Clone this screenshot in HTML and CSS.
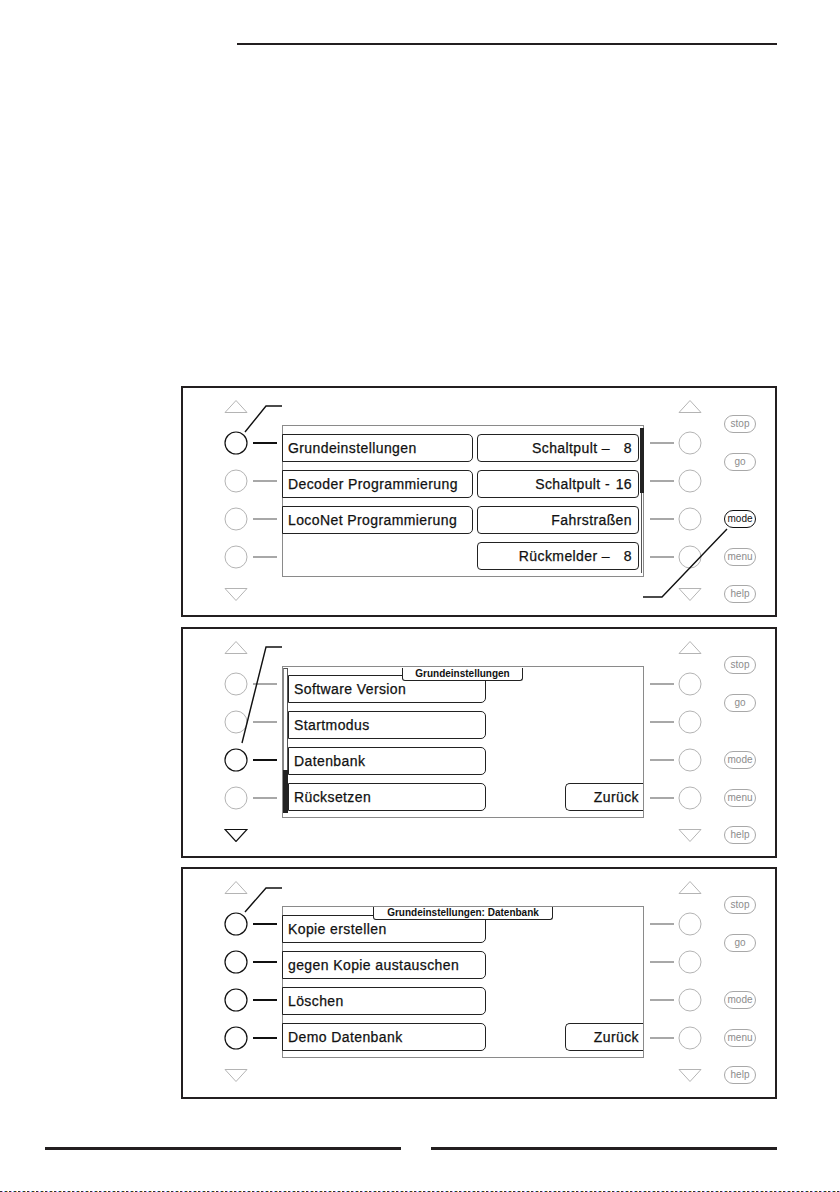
FILE: index.html
```html
<!DOCTYPE html>
<html lang="de">
<head>
<meta charset="utf-8">
<title>Grundeinstellungen</title>
<link rel="stylesheet" href="styles.css">
</head>
<body>
<div class="page">
  <div class="top-rule"></div>

  <div class="panels">
    <!-- Panel 1 -->
    <section class="panel">
      <svg class="callout" viewBox="0 0 596 231" width="596" height="231">
        <polyline points="64,46 85,20 101,20"/>
        <polyline points="546,143 481,211 462,211"/>
      </svg>
      <div class="controls">
        <svg class="tri off" viewBox="0 0 24 13"><polygon points="1,12.5 12,0.5 23,12.5"/></svg>
        <div class="rows">
          <div class="row"><svg class="knob on" viewBox="0 0 24 24"><circle cx="12" cy="12" r="11"/></svg></div>
          <div class="row"><svg class="knob off" viewBox="0 0 24 24"><circle cx="12" cy="12" r="11"/></svg></div>
          <div class="row"><svg class="knob off" viewBox="0 0 24 24"><circle cx="12" cy="12" r="11"/></svg></div>
          <div class="row"><svg class="knob off" viewBox="0 0 24 24"><circle cx="12" cy="12" r="11"/></svg></div>
        </div>
        <svg class="tri off down" viewBox="0 0 24 13"><polygon points="1,0.5 23,0.5 12,12.5"/></svg>
      </div>
      <div class="links">
        <div class="row"><span class="link on"></span></div>
        <div class="row"><span class="link"></span></div>
        <div class="row"><span class="link"></span></div>
        <div class="row"><span class="link"></span></div>
      </div>
      <div class="screen">
        <div class="menu-col col-a">
          <div class="btn btn-l">Grundeinstellungen</div>
          <div class="btn btn-l">Decoder Programmierung</div>
          <div class="btn btn-l">LocoNet Programmierung</div>
        </div>
        <div class="menu-col col-b">
          <div class="btn btn-r">Schaltpult –<span class="num">8</span></div>
          <div class="btn btn-r">Schaltpult -<span class="num">16</span></div>
          <div class="btn btn-r">Fahrstraßen</div>
          <div class="btn btn-r">Rückmelder –<span class="num">8</span></div>
        </div>
        <div class="scroll scroll-top"><div class="thumb"></div></div>
      </div>
      <div class="links links-r">
        <div class="row"><span class="link"></span></div>
        <div class="row"><span class="link"></span></div>
        <div class="row"><span class="link"></span></div>
        <div class="row"><span class="link"></span></div>
      </div>
      <div class="controls controls-r">
        <svg class="tri off" viewBox="0 0 24 13"><polygon points="1,12.5 12,0.5 23,12.5"/></svg>
        <div class="rows">
          <div class="row"><svg class="knob off" viewBox="0 0 24 24"><circle cx="12" cy="12" r="11"/></svg></div>
          <div class="row"><svg class="knob off" viewBox="0 0 24 24"><circle cx="12" cy="12" r="11"/></svg></div>
          <div class="row"><svg class="knob off" viewBox="0 0 24 24"><circle cx="12" cy="12" r="11"/></svg></div>
          <div class="row"><svg class="knob off" viewBox="0 0 24 24"><circle cx="12" cy="12" r="11"/></svg></div>
        </div>
        <svg class="tri off down" viewBox="0 0 24 13"><polygon points="1,0.5 23,0.5 12,12.5"/></svg>
      </div>
      <div class="side">
        <div class="pill p-stop">stop</div>
        <div class="pill p-go">go</div>
        <div class="pill p-mode active">mode</div>
        <div class="pill p-menu">menu</div>
        <div class="pill p-help">help</div>
      </div>
    </section>

    <!-- Panel 2 -->
    <section class="panel panel-2">
      <svg class="callout" viewBox="0 0 596 231" width="596" height="231">
        <polyline points="61,116 85,20 101,20"/>
      </svg>
      <div class="controls">
        <svg class="tri off" viewBox="0 0 24 13"><polygon points="1,12.5 12,0.5 23,12.5"/></svg>
        <div class="rows">
          <div class="row"><svg class="knob off" viewBox="0 0 24 24"><circle cx="12" cy="12" r="11"/></svg></div>
          <div class="row"><svg class="knob off" viewBox="0 0 24 24"><circle cx="12" cy="12" r="11"/></svg></div>
          <div class="row"><svg class="knob on" viewBox="0 0 24 24"><circle cx="12" cy="12" r="11"/></svg></div>
          <div class="row"><svg class="knob off" viewBox="0 0 24 24"><circle cx="12" cy="12" r="11"/></svg></div>
        </div>
        <svg class="tri on down" viewBox="0 0 24 13"><polygon points="1,0.5 23,0.5 12,12.5"/></svg>
      </div>
      <div class="links">
        <div class="row"><span class="link"></span></div>
        <div class="row"><span class="link"></span></div>
        <div class="row"><span class="link on"></span></div>
        <div class="row"><span class="link"></span></div>
      </div>
      <div class="screen">
        <div class="tab tab-2">Grundeinstellungen</div>
        <div class="scroll scroll-left"><div class="thumb"></div></div>
        <div class="menu-col col-wide">
          <div class="btn btn-w">Software Version</div>
          <div class="btn btn-w">Startmodus</div>
          <div class="btn btn-w">Datenbank</div>
          <div class="btn btn-w">Rücksetzen</div>
        </div>
        <div class="menu-col col-back">
          <div class="btn btn-back">Zurück</div>
        </div>
      </div>
      <div class="links links-r">
        <div class="row"><span class="link"></span></div>
        <div class="row"><span class="link"></span></div>
        <div class="row"><span class="link"></span></div>
        <div class="row"><span class="link"></span></div>
      </div>
      <div class="controls controls-r">
        <svg class="tri off" viewBox="0 0 24 13"><polygon points="1,12.5 12,0.5 23,12.5"/></svg>
        <div class="rows">
          <div class="row"><svg class="knob off" viewBox="0 0 24 24"><circle cx="12" cy="12" r="11"/></svg></div>
          <div class="row"><svg class="knob off" viewBox="0 0 24 24"><circle cx="12" cy="12" r="11"/></svg></div>
          <div class="row"><svg class="knob off" viewBox="0 0 24 24"><circle cx="12" cy="12" r="11"/></svg></div>
          <div class="row"><svg class="knob off" viewBox="0 0 24 24"><circle cx="12" cy="12" r="11"/></svg></div>
        </div>
        <svg class="tri off down" viewBox="0 0 24 13"><polygon points="1,0.5 23,0.5 12,12.5"/></svg>
      </div>
      <div class="side">
        <div class="pill p-stop">stop</div>
        <div class="pill p-go">go</div>
        <div class="pill p-mode">mode</div>
        <div class="pill p-menu">menu</div>
        <div class="pill p-help">help</div>
      </div>
    </section>

    <!-- Panel 3 -->
    <section class="panel panel-3">
      <svg class="callout" viewBox="0 0 596 231" width="596" height="231">
        <polyline points="64,45 85,21 101,21"/>
      </svg>
      <div class="controls">
        <svg class="tri off" viewBox="0 0 24 13"><polygon points="1,12.5 12,0.5 23,12.5"/></svg>
        <div class="rows">
          <div class="row"><svg class="knob on" viewBox="0 0 24 24"><circle cx="12" cy="12" r="11"/></svg></div>
          <div class="row"><svg class="knob on" viewBox="0 0 24 24"><circle cx="12" cy="12" r="11"/></svg></div>
          <div class="row"><svg class="knob on" viewBox="0 0 24 24"><circle cx="12" cy="12" r="11"/></svg></div>
          <div class="row"><svg class="knob on" viewBox="0 0 24 24"><circle cx="12" cy="12" r="11"/></svg></div>
        </div>
        <svg class="tri off down" viewBox="0 0 24 13"><polygon points="1,0.5 23,0.5 12,12.5"/></svg>
      </div>
      <div class="links">
        <div class="row"><span class="link on"></span></div>
        <div class="row"><span class="link on"></span></div>
        <div class="row"><span class="link on"></span></div>
        <div class="row"><span class="link on"></span></div>
      </div>
      <div class="screen">
        <div class="tab tab-3">Grundeinstellungen: Datenbank</div>
        <div class="menu-col col-full">
          <div class="btn btn-f">Kopie erstellen</div>
          <div class="btn btn-f">gegen Kopie austauschen</div>
          <div class="btn btn-f">Löschen</div>
          <div class="btn btn-f">Demo Datenbank</div>
        </div>
        <div class="menu-col col-back">
          <div class="btn btn-back">Zurück</div>
        </div>
      </div>
      <div class="links links-r">
        <div class="row"><span class="link"></span></div>
        <div class="row"><span class="link"></span></div>
        <div class="row"><span class="link"></span></div>
        <div class="row"><span class="link"></span></div>
      </div>
      <div class="controls controls-r">
        <svg class="tri off" viewBox="0 0 24 13"><polygon points="1,12.5 12,0.5 23,12.5"/></svg>
        <div class="rows">
          <div class="row"><svg class="knob off" viewBox="0 0 24 24"><circle cx="12" cy="12" r="11"/></svg></div>
          <div class="row"><svg class="knob off" viewBox="0 0 24 24"><circle cx="12" cy="12" r="11"/></svg></div>
          <div class="row"><svg class="knob off" viewBox="0 0 24 24"><circle cx="12" cy="12" r="11"/></svg></div>
          <div class="row"><svg class="knob off" viewBox="0 0 24 24"><circle cx="12" cy="12" r="11"/></svg></div>
        </div>
        <svg class="tri off down" viewBox="0 0 24 13"><polygon points="1,0.5 23,0.5 12,12.5"/></svg>
      </div>
      <div class="side">
        <div class="pill p-stop">stop</div>
        <div class="pill p-go">go</div>
        <div class="pill p-mode">mode</div>
        <div class="pill p-menu">menu</div>
        <div class="pill p-help">help</div>
      </div>
    </section>
  </div>

  <div class="footer">
    <div class="rule rule-a"></div>
    <div class="rule rule-b"></div>
  </div>
  <div class="scanline"></div>
</div>
</body>
</html>
```

FILE: styles.css
```css
html, body {
  margin: 0;
  padding: 0;
  background: #fff;
  overflow: hidden;
}
body {
  font-family: "Liberation Sans", Arial, sans-serif;
  color: #111;
}
.page {
  width: 840px;
  height: 1192px;
  display: flex;
  flex-direction: column;
}
.top-rule {
  margin: 43px 0 0 237px;
  width: 540px;
  height: 2px;
  background: #231f20;
}
.panels {
  margin: 341px 0 0 181px;
  display: flex;
  flex-direction: column;
}
.panel {
  position: relative;
  box-sizing: border-box;
  width: 596px;
  height: 231px;
  border: 2px solid #231f20;
  display: flex;
  align-items: flex-start;
}
.panel-2 { margin-top: 10px; }
.panel-3 { margin-top: 9px; height: 232px; }

.callout {
  position: absolute;
  left: -2px;
  top: -2px;
  pointer-events: none;
}
.callout polyline {
  fill: none;
  stroke: #111;
  stroke-width: 1.4;
}

/* knob columns */
.controls {
  margin-left: 41px;
  width: 24px;
  padding-top: 12px;
  display: flex;
  flex-direction: column;
  align-items: center;
}
.controls-r { margin-left: 4px; }
.controls .rows { margin-top: 11px; }
.controls .down { margin-top: 12px; }
.tri {
  width: 24px;
  height: 13px;
  display: block;
}
.tri polygon {
  fill: none;
  stroke-width: 1;
}
.tri.off polygon { stroke: #b4b4b4; }
.tri.on polygon { stroke: #111; stroke-width: 1.2; }
.row {
  height: 38px;
  display: flex;
  align-items: center;
  justify-content: center;
}
.knob {
  width: 24px;
  height: 24px;
  display: block;
}
.knob circle { fill: none; stroke-width: 1; }
.knob.off circle { stroke: #b4b4b4; }
.knob.on circle { stroke: #111; stroke-width: 1.2; }

.links {
  margin-left: 5px;
  width: 24px;
  padding-top: 36px;
}
.links-r { margin-left: 6px; }
.link {
  display: block;
  width: 24px;
  height: 2.5px;
  background: #a8a8a8;
}
.link.on { background: #111; }

/* screen */
.screen {
  position: relative;
  margin: 37px 0 0 5px;
  box-sizing: border-box;
  width: 362px;
  height: 152px;
  border: 1px solid #8a8a8a;
  display: flex;
  align-items: flex-start;
}
.menu-col {
  display: flex;
  flex-direction: column;
  gap: 8px;
  padding-top: 8px;
}
.btn {
  box-sizing: border-box;
  height: 28px;
  border: 1px solid #222;
  display: flex;
  align-items: center;
  font-size: 14px;
  letter-spacing: 0.4px;
  -webkit-text-stroke: 0.25px #111;
  white-space: nowrap;
}
.col-a { margin-left: -1px; }
.btn-l {
  width: 191px;
  border-radius: 0 5px 5px 0;
  padding-left: 5px;
}
.col-b { margin-left: 4px; }
.btn-r {
  width: 162px;
  border-radius: 4px;
  justify-content: flex-end;
  padding-right: 6px;
}
.num {
  display: inline-block;
  width: 22px;
  text-align: right;
}
.scroll {
  box-sizing: border-box;
  position: relative;
}
.scroll-top {
  width: 4px;
  height: 145px;
  margin: 2px 0 0 1px;
  background: linear-gradient(90deg, transparent 0 1px, #555 1px 2px, transparent 2px);
}
.scroll-top .thumb {
  width: 4px;
  height: 65px;
  background: #222;
}
.scroll-left {
  width: 5px;
  height: 145px;
  margin-top: 1px;
  border: 1px solid #555;
  border-left-color: #888;
  display: flex;
  flex-direction: column;
  justify-content: flex-end;
}
.scroll-left .thumb {
  margin: 0 -1px -1px -1px;
  height: 43px;
  background: #222;
}
.btn-w {
  width: 198px;
  border-radius: 0 5px 5px 0;
  padding-left: 5px;
}
.col-full { margin-left: -1px; }
.btn-f {
  width: 204px;
  border-radius: 0 5px 5px 0;
  padding-left: 5px;
}
.col-back {
  margin-left: auto;
  padding-top: 116px;
}
.btn-back {
  width: 78px;
  border-right: none;
  border-radius: 5px 0 0 5px;
  justify-content: flex-end;
  padding-right: 4px;
}
.tab {
  position: absolute;
  top: 1px;
  box-sizing: border-box;
  height: 13px;
  background: #fff;
  border: 1px solid #222;
  border-top: none;
  border-radius: 0 0 3px 3px;
  font-size: 10px;
  font-weight: bold;
  line-height: 12px;
  text-align: center;
  z-index: 1;
  white-space: nowrap;
}
.tab-2 { left: 119px; width: 121px; }
.tab-3 { left: 90px; width: 180px; top: 0; }

/* side buttons */
.side {
  margin-left: 22px;
  width: 32px;
  padding-top: 27px;
  display: flex;
  flex-direction: column;
}
.pill {
  box-sizing: border-box;
  width: 32px;
  height: 18px;
  border: 1px solid #a8a8a8;
  border-radius: 9px;
  color: #8c8c8c;
  font-size: 10px;
  display: flex;
  align-items: center;
  justify-content: center;
  line-height: 1;
}
.pill.active {
  border: 1.5px solid #111;
  color: #111;
}
.p-go { margin-top: 20px; }
.p-mode { margin-top: 39px; }
.p-menu { margin-top: 20px; }
.p-help { margin-top: 19px; }

/* footer */
.footer {
  margin-top: 48px;
  display: flex;
  align-items: flex-start;
}
.rule {
  height: 3px;
  background: #231f20;
}
.rule-a { margin-left: 45px; width: 356px; }
.rule-b { margin-left: 30px; width: 346px; }
.scanline {
  margin-top: auto;
  height: 1px;
  background: repeating-linear-gradient(90deg, #333 0 2px, #b8f 2px 3px, #fff 3px 4px, #6ce 4px 5px, #333 5px 7px, #eb5 7px 8px, #fff 8px 9px);
}
```
